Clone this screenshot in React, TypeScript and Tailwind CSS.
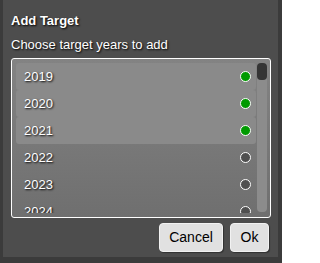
import React from "react";

const years = [
  { y: "2019", on: true },
  { y: "2020", on: true },
  { y: "2021", on: true },
  { y: "2022", on: false },
  { y: "2023", on: false },
  { y: "2024", on: false },
];

export default function App() {
  return (
    <div
      className="w-[282px] h-[263px] bg-[#3b3b3b] overflow-hidden"
      style={{ fontFamily: '"Liberation Sans", Arial, sans-serif' }}
    >
      <div className="ml-[3px] w-[275px] h-[257px] bg-[#4d4d4d] flex flex-col px-[8px] pt-[13px]">
        <div className="text-[13px] leading-[15px] font-bold text-white [text-shadow:1px_1px_2px_#000]">
          Add Target
        </div>
        <div className="mt-[9px] text-[13px] leading-[15px] text-white [text-shadow:1px_1px_2px_#000]">
          Choose target years to add
        </div>
        <div className="mt-[6px] h-[160px] w-[260px] border border-white rounded-[3px] bg-gradient-to-b from-[#838383] to-[#6f6f6f] flex p-[4px] pr-[3px]">
          <div className="flex-1 h-[150px] overflow-hidden flex flex-col">
            {years.map((it) => (
              <div
                key={it.y}
                className={
                  "h-[27px] shrink-0 flex items-center justify-between pl-[8px] pr-[5px] rounded-[3px] " +
                  (it.on ? "bg-[#8a8a8a]" : "")
                }
              >
                <span className="text-[13px] leading-[27px] text-white [text-shadow:1px_1px_2px_#000]">
                  {it.y}
                </span>
                <span
                  className={
                    "w-[11px] h-[11px] rounded-full border-[1.5px] border-white " +
                    (it.on ? "bg-[#009a00]" : "bg-[#4f4f4f]")
                  }
                />
              </div>
            ))}
          </div>
          <div className="ml-[1px] w-[10px] h-[149px] rounded-[4px] bg-[#8c8c8c] flex flex-col">
            <div className="w-[10px] h-[17px] rounded-[4px] bg-[#353535]" />
          </div>
        </div>
        <div className="mt-[5px] flex justify-end gap-[7px] pr-[1px]">
          <button className="w-[64px] h-[29px] rounded-[4px] bg-[#e1e1e1] border border-[#f2f2f2] shadow-[1px_1px_1px_rgba(0,0,0,0.35)] text-[14px] text-black">
            Cancel
          </button>
          <button className="w-[39px] h-[29px] rounded-[4px] bg-[#e1e1e1] border border-[#f2f2f2] shadow-[1px_1px_1px_rgba(0,0,0,0.35)] text-[14px] text-black">
            Ok
          </button>
        </div>
      </div>
    </div>
  );
}
